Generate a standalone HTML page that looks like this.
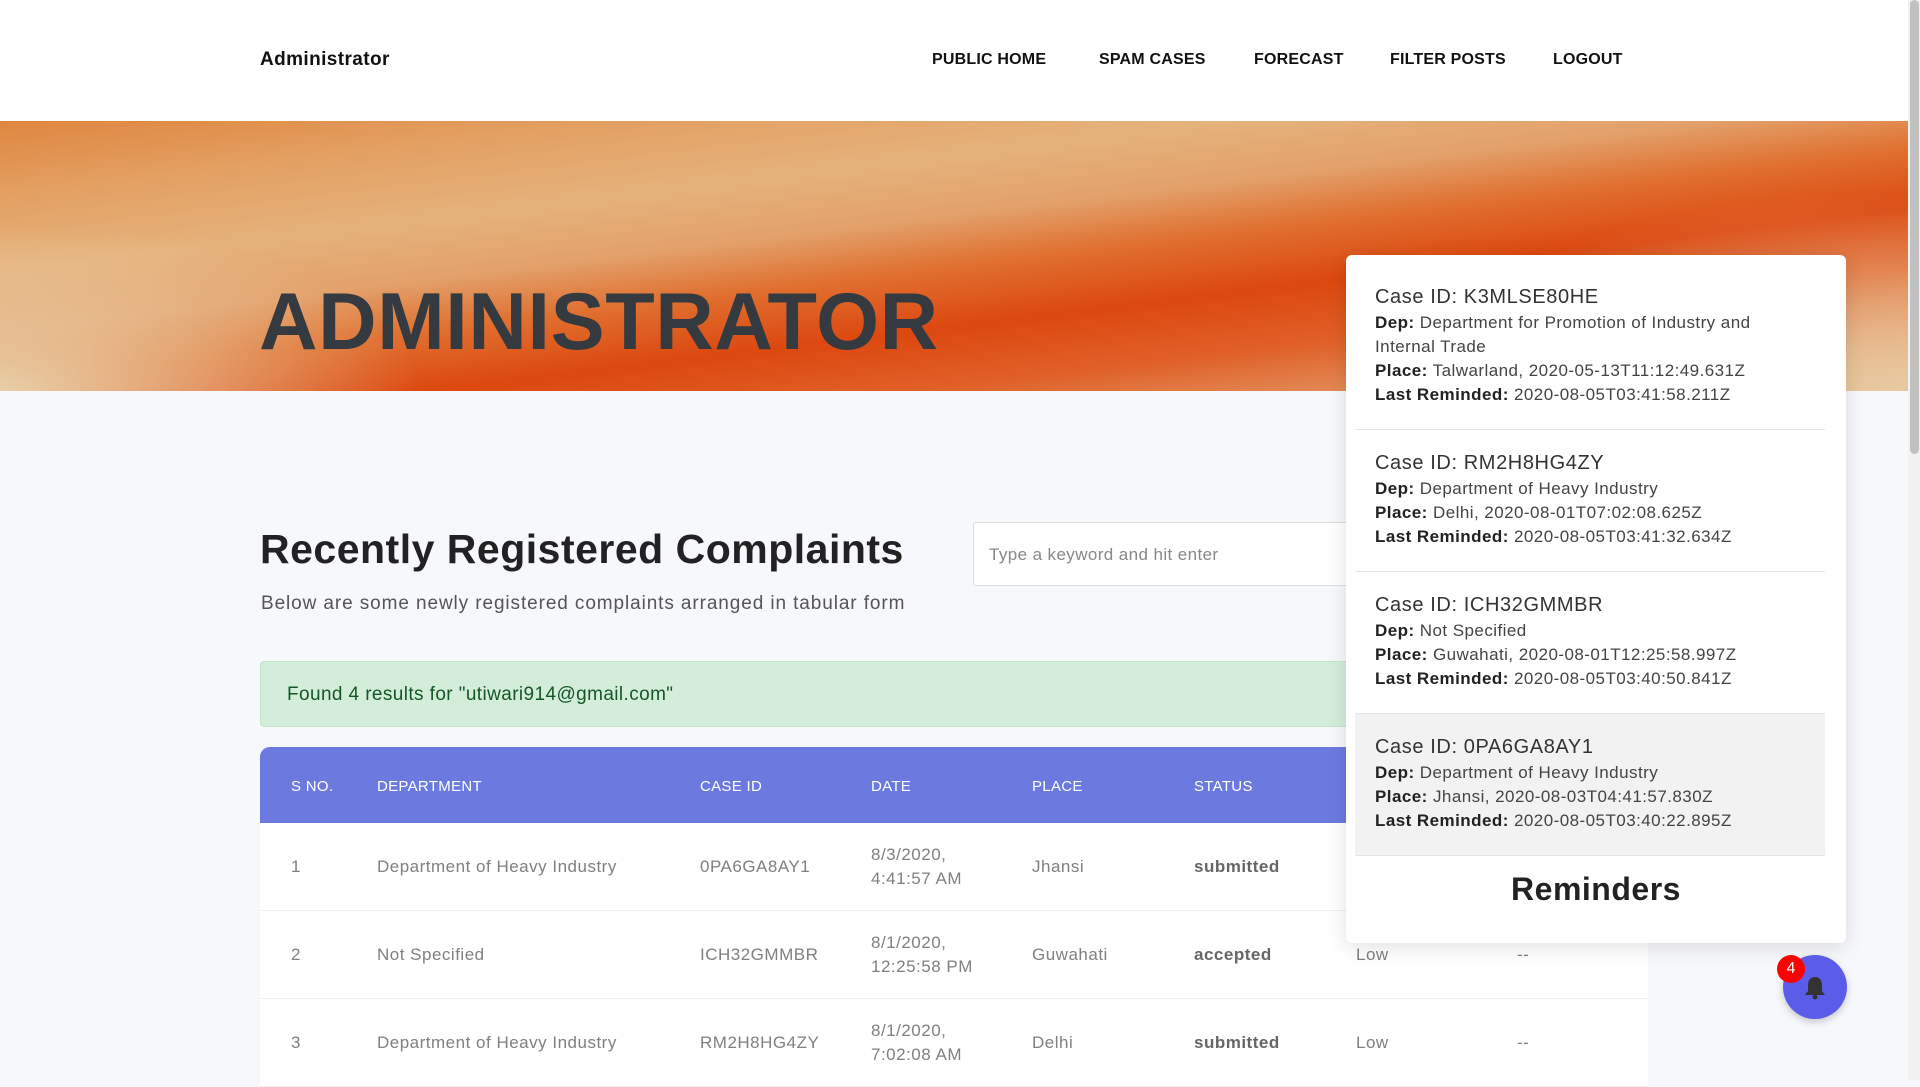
<!DOCTYPE html>
<html><head><meta charset="utf-8"><style>
*{box-sizing:border-box;margin:0;padding:0}
body{width:1920px;height:1080px;overflow:hidden;background:#f7f8fc;font-family:"Liberation Sans",sans-serif;position:relative}
.hdr{position:absolute;left:0;top:0;width:1908px;height:121px;background:#fff}
.brand{position:absolute;left:260px;top:49px;font-size:19px;font-weight:bold;color:#111;letter-spacing:.4px}
.nav{position:absolute;top:51px;font-size:16px;font-weight:bold;color:#111;letter-spacing:.2px}
.hero{position:absolute;left:0;top:121px;width:1908px;height:270px;
background:radial-gradient(ellipse 420px 170px at 0% 100%,rgba(232,207,168,1),rgba(232,207,168,0)),radial-gradient(ellipse 500px 200px at 100% 100%,rgba(232,200,160,.9),rgba(232,200,160,0)),linear-gradient(173deg,#df8640 0%,#e3a062 15%,#e5b27c 30%,#e3a06a 42%,#e07030 52%,#dc4810 64%,#e06028 76%,#e49a68 90%,#e7c9a0 100%)}
.hero h1{position:absolute;left:259px;top:155px;font-size:81px;font-weight:900;color:#343a40;letter-spacing:.6px}
.scroll{position:absolute;right:0;top:0;width:12px;height:1080px;background:#f1f1f1}
.scroll div{position:absolute;left:2px;top:0;width:9px;height:454px;background:#c1c1c1;border-radius:5px}
h2{position:absolute;left:260px;top:526px;font-size:41px;font-weight:bold;color:#222;letter-spacing:.5px}
.sub{position:absolute;left:261px;top:593px;font-size:19px;color:#555;letter-spacing:.9px}
.search{position:absolute;left:973px;top:522px;width:400px;height:64px;background:#fff;border:1px solid #ddd;border-radius:3px;font-size:17px;color:#888;padding:22px 15px;letter-spacing:.4px}
.alert{position:absolute;left:260px;top:661px;width:1100px;height:66px;background:#d4edda;border:1px solid #c3e6cb;border-radius:4px;color:#155724;font-size:19px;padding:22px 26px;letter-spacing:.4px}
.tbl{position:absolute;left:260px;top:747px;width:1388px;height:340px;background:#fff;border-radius:10px 10px 0 0;overflow:hidden}
.th{height:76px;background:#6c7ae0;color:#fff;font-size:15px;position:relative;letter-spacing:.3px}
.row{height:88px;border-bottom:1px solid #eee;position:relative;color:#808080;font-size:17px;letter-spacing:.5px}
.c{position:absolute;top:50%;transform:translateY(-50%);line-height:24px}
.th .c{margin-top:2px}
.pop{position:absolute;left:1346px;top:255px;width:500px;height:688px;background:#fff;border-radius:6px;box-shadow:0 4px 20px rgba(0,0,0,.12)}
.it{position:absolute;left:9px;width:470px;height:142px;padding:19px 20px 0;border-bottom:1px solid #e5e5e5;color:#444;font-size:17px;line-height:24px;letter-spacing:.45px}
.it .cid{font-size:20px;line-height:28px;color:#333;letter-spacing:.6px}
.it b{color:#222}
.rem{position:absolute;left:0;width:500px;top:616px;text-align:center;font-size:32px;font-weight:bold;color:#222;letter-spacing:.5px}
.bell{position:absolute;left:1783px;top:955px;width:64px;height:64px;border-radius:50%;background:#5b5de8;box-shadow:0 3px 8px rgba(0,0,0,.2)}
.badge{position:absolute;left:1777px;top:955px;width:28px;height:28px;border-radius:50%;background:#f00;color:#fff;font-size:16px;text-align:center;line-height:28px}
</style></head><body>
<div class="hdr">
<div class="brand">Administrator</div>
<div class="nav" style="left:932px">PUBLIC HOME</div>
<div class="nav" style="left:1099px">SPAM CASES</div>
<div class="nav" style="left:1254px">FORECAST</div>
<div class="nav" style="left:1390px">FILTER POSTS</div>
<div class="nav" style="left:1553px">LOGOUT</div>
</div>
<div class="hero"><h1>ADMINISTRATOR</h1></div>
<h2>Recently Registered Complaints</h2>
<div class="sub">Below are some newly registered complaints arranged in tabular form</div>
<div class="search">Type a keyword and hit enter</div>
<div class="alert">Found 4 results for "utiwari914@gmail.com"</div>
<div class="tbl">
<div class="th">
<span class="c" style="left:31px">S NO.</span><span class="c" style="left:117px">DEPARTMENT</span><span class="c" style="left:440px">CASE ID</span><span class="c" style="left:611px">DATE</span><span class="c" style="left:772px">PLACE</span><span class="c" style="left:934px">STATUS</span>
</div>
<div class="row"><span class="c" style="left:31px">1</span><span class="c" style="left:117px">Department of Heavy Industry</span><span class="c" style="left:440px">0PA6GA8AY1</span><span class="c" style="left:611px">8/3/2020,<br>4:41:57 AM</span><span class="c" style="left:772px">Jhansi</span><span class="c" style="left:934px;font-weight:bold;color:#666">submitted</span></div>
<div class="row"><span class="c" style="left:31px">2</span><span class="c" style="left:117px">Not Specified</span><span class="c" style="left:440px">ICH32GMMBR</span><span class="c" style="left:611px">8/1/2020,<br>12:25:58 PM</span><span class="c" style="left:772px">Guwahati</span><span class="c" style="left:934px;font-weight:bold;color:#666">accepted</span><span class="c" style="left:1096px">Low</span><span class="c" style="left:1257px">--</span></div>
<div class="row"><span class="c" style="left:31px">3</span><span class="c" style="left:117px">Department of Heavy Industry</span><span class="c" style="left:440px">RM2H8HG4ZY</span><span class="c" style="left:611px">8/1/2020,<br>7:02:08 AM</span><span class="c" style="left:772px">Delhi</span><span class="c" style="left:934px;font-weight:bold;color:#666">submitted</span><span class="c" style="left:1096px">Low</span><span class="c" style="left:1257px">--</span></div>
</div>
<div class="pop">
<div class="it" style="top:0;height:175px;padding-top:28px"><div class="cid">Case ID: K3MLSE80HE</div><b>Dep:</b> Department for Promotion of Industry and<br>Internal Trade<br><b>Place:</b> Talwarland, 2020-05-13T11:12:49.631Z<br><b>Last Reminded:</b> 2020-08-05T03:41:58.211Z</div>
<div class="it" style="top:175px"><div class="cid">Case ID: RM2H8HG4ZY</div><b>Dep:</b> Department of Heavy Industry<br><b>Place:</b> Delhi, 2020-08-01T07:02:08.625Z<br><b>Last Reminded:</b> 2020-08-05T03:41:32.634Z</div>
<div class="it" style="top:317px"><div class="cid">Case ID: ICH32GMMBR</div><b>Dep:</b> Not Specified<br><b>Place:</b> Guwahati, 2020-08-01T12:25:58.997Z<br><b>Last Reminded:</b> 2020-08-05T03:40:50.841Z</div>
<div class="it" style="top:459px;background:#f2f2f2"><div class="cid">Case ID: 0PA6GA8AY1</div><b>Dep:</b> Department of Heavy Industry<br><b>Place:</b> Jhansi, 2020-08-03T04:41:57.830Z<br><b>Last Reminded:</b> 2020-08-05T03:40:22.895Z</div>
<div class="rem">Reminders</div>
</div>
<div class="bell"><svg width="64" height="64" viewBox="0 0 64 64"><path d="M32 22c-5 0-7 4-7 8v6l-3 4h20l-3-4v-6c0-4-2-8-7-8z" fill="#333"/><circle cx="32" cy="42" r="2.5" fill="#333"/></svg></div>
<div class="badge">4</div>
<div class="scroll"><div></div></div>
</body></html>
